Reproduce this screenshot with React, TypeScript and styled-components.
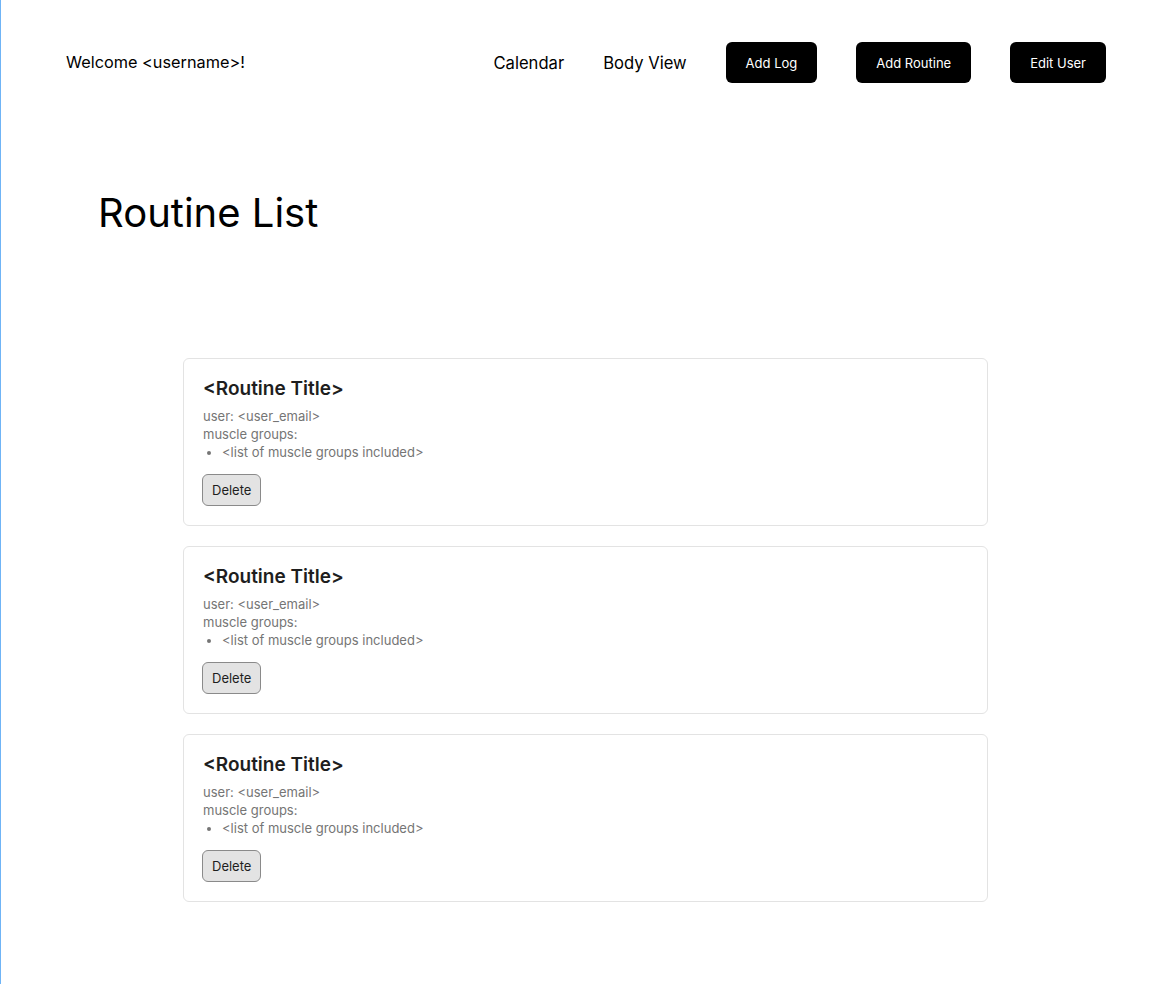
import React from "react";
import styled, { createGlobalStyle } from "styled-components";

const GlobalStyle = createGlobalStyle`
  html, body {
    margin: 0;
    padding: 0;
    background: #ffffff;
  }
  body {
    font-family: Inter, "Liberation Sans", sans-serif;
    color: #000;
    -webkit-font-smoothing: antialiased;
  }
`;

const Page = styled.div`
  min-height: 984px;
  box-sizing: border-box;
  border-left: 1px solid #6fb4f6;
`;

const Header = styled.header`
  display: flex;
  align-items: center;
  justify-content: space-between;
  padding: 42px 62px 0 65px;
`;

const Welcome = styled.span`
  font-size: 16.3px;
  line-height: 41px;
`;

const Nav = styled.nav`
  display: flex;
  align-items: center;
  gap: 39px;
`;

const NavLink = styled.a`
  font-size: 16.6px;
  color: #000;
  text-decoration: none;
  cursor: pointer;
`;

const NavButton = styled.button`
  height: 41px;
  padding: 0 20px;
  border: none;
  border-radius: 6px;
  background: #000;
  color: #fff;
  font-family: inherit;
  font-size: 13px;
  cursor: pointer;
`;

const PageTitle = styled.h1`
  margin: 106px 0 0 97px;
  font-size: 40px;
  font-weight: 400;
  line-height: 48px;
`;

const List = styled.section`
  display: flex;
  flex-direction: column;
  gap: 20px;
  width: 805px;
  margin: 121px 0 0 182px;
`;

const Card = styled.article`
  border: 1px solid #e3e3e3;
  border-radius: 6px;
  padding: 18px 19px 18px 19px;
  height: 168px;
  box-sizing: border-box;
`;

const CardTitle = styled.h2`
  margin: 0;
  font-size: 19px;
  font-weight: 600;
  line-height: 24px;
  color: #1e1e1e;
`;

const Meta = styled.div`
  margin-top: 6px;
  font-size: 13px;
  line-height: 18px;
  color: #757575;
`;

const Groups = styled.ul`
  margin: 0;
  padding-left: 19px;
`;

const DeleteButton = styled.button`
  margin-top: 13px;
  margin-left: -1px;
  height: 32px;
  padding: 0 9px;
  border: 1px solid #8a8a8a;
  border-radius: 6px;
  background: #e3e3e3;
  color: #1e1e1e;
  font-family: inherit;
  font-size: 13px;
  cursor: pointer;
`;

type Routine = {
  title: string;
  email: string;
  groups: string;
};

const routines: Routine[] = [
  { title: "<Routine Title>", email: "<user_email>", groups: "<list of muscle groups included>" },
  { title: "<Routine Title>", email: "<user_email>", groups: "<list of muscle groups included>" },
  { title: "<Routine Title>", email: "<user_email>", groups: "<list of muscle groups included>" },
];

function RoutineCard({ title, email, groups }: Routine) {
  return (
    <Card>
      <CardTitle>{title}</CardTitle>
      <Meta>
        <div>user: {email}</div>
        <div>muscle groups:</div>
        <Groups>
          <li>{groups}</li>
        </Groups>
      </Meta>
      <DeleteButton>Delete</DeleteButton>
    </Card>
  );
}

export default function App() {
  return (
    <Page>
      <GlobalStyle />
      <Header>
        <Welcome>Welcome &lt;username&gt;!</Welcome>
        <Nav>
          <NavLink>Calendar</NavLink>
          <NavLink>Body View</NavLink>
          <NavButton>Add Log</NavButton>
          <NavButton>Add Routine</NavButton>
          <NavButton>Edit User</NavButton>
        </Nav>
      </Header>
      <PageTitle>Routine List</PageTitle>
      <List>
        {routines.map((r, i) => (
          <RoutineCard key={i} {...r} />
        ))}
      </List>
    </Page>
  );
}
